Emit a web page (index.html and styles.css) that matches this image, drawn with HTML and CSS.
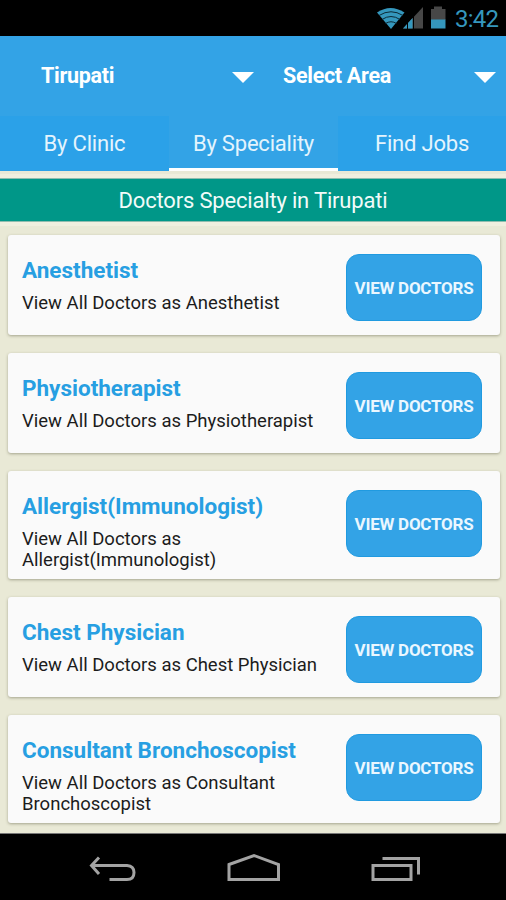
FILE: index.html
```html
<!DOCTYPE html>
<html lang="en">
<head>
  <meta charset="UTF-8" />
  <title>Doctors Specialty in Tirupati</title>
  <meta name="viewport" content="width=device-width, initial-scale=1.0" />
  <link rel="stylesheet" href="styles.css">
</head>
<body>

  <div class="status-bar">
    <svg class="status-icons" width="70" height="36" viewBox="0 0 70 36">
      <!-- wifi -->
      <path d="M0 12.5Q13.5 3.500 27.5 12.5L14 29Z" fill="#3597bd" />
      <path d="M2 15.500Q14 8 26 15.500M5 19.500Q14 13.5 23 19.500M8.500 23.500Q14 20 19.500 23.500" fill="none" stroke="#0b2a36" stroke-width="1" />
      <!-- signal -->
      <path d="M46 7V28.500H26Z" fill="#474747" />
      <path d="M35.500 18V28.500H26Z" fill="#3597bd" />
      <path d="M30.500 20V29M36.500 14V29" stroke="#000" stroke-width="1" />
      <!-- battery -->
      <path d="M54 9H57V6.500H65V9H68.500V20H54Z" fill="#474747" />
      <path d="M54 19.500H68.500V28.500H54Z" fill="#3597bd" />
    </svg>
    <span class="time">3:42</span>
  </div>

  <div class="spinners">
    <div class="spinner city"><span>Tirupati</span><i class="caret"></i></div>
    <div class="spinner area"><span>Select Area</span><i class="caret"></i></div>
  </div>

  <div class="tabs">
    <a class="tab">By Clinic</a>
    <a class="tab active">By Speciality</a>
    <a class="tab">Find Jobs</a>
  </div>

  <h1 class="banner"><span>Doctors Specialty in Tirupati</span></h1>

  <div class="list">
    <div class="card">
      <div class="info">
        <h2><span>Anesthetist</span></h2>
        <p><span>View All Doctors as Anesthetist</span></p>
      </div>
      <button><span>VIEW DOCTORS</span></button>
    </div>
    <div class="card">
      <div class="info">
        <h2><span>Physiotherapist</span></h2>
        <p><span>View All Doctors as Physiotherapist</span></p>
      </div>
      <button><span>VIEW DOCTORS</span></button>
    </div>
    <div class="card tall">
      <div class="info">
        <h2><span>Allergist(Immunologist)</span></h2>
        <p><span>View All Doctors as<br>Allergist(Immunologist)</span></p>
      </div>
      <button><span>VIEW DOCTORS</span></button>
    </div>
    <div class="card">
      <div class="info">
        <h2><span>Chest Physician</span></h2>
        <p><span>View All Doctors as Chest Physician</span></p>
      </div>
      <button><span>VIEW DOCTORS</span></button>
    </div>
    <div class="card tall">
      <div class="info">
        <h2><span>Consultant Bronchoscopist</span></h2>
        <p><span>View All Doctors as Consultant<br>Bronchoscopist</span></p>
      </div>
      <button><span>VIEW DOCTORS</span></button>
    </div>
  </div>

  <div class="nav-bar">
    <svg width="48" height="30" viewBox="0 0 48 30">
      <path d="M10 2.500L2.500 10.500L10 19M3 10.500H38Q45 11 45 17.500Q45 24.500 38 24.500H20.500" />
    </svg>
    <svg width="54" height="30" viewBox="0 0 54 30">
      <path d="M1 9.500L26 .5L50.500 9.500V24.500H1Z" />
    </svg>
    <svg width="50" height="30" viewBox="0 0 50 30">
      <path d="M1 10.500H39V24.500H1ZM10.500 3.500H46.500V19.500" />
    </svg>
  </div>

</body>
</html>
```
FILE: styles.css
```css
* {
  box-sizing: border-box;
}

body {
  margin: 0;
  width: 506px;
  height: 900px;
  display: flex;
  flex-direction: column;
  overflow: hidden;
  background: #e9e9d6;
  font-family: Roboto, sans-serif;
}

h1, h2, p {
  margin: 0;
}

.status-bar {
  height: 36px;
  padding-right: 8px;
  display: flex;
  justify-content: flex-end;
  background: #000;
}

.time {
  width: 43px;
  margin-left: 8px;
  font-size: 24px;
  letter-spacing: -.8px;
  line-height: 38px;
  color: #3597bd;
  white-space: nowrap;
}

.spinners {
  height: 80px;
  display: flex;
  background: #33a3e6;
  color: #fff;
  font-size: 21.500px;
  font-weight: 700;
  letter-spacing: -.3px;
}

.spinner {
  display: flex;
  align-items: center;
  justify-content: space-between;
}

.spinner span {
  margin-top: -1px;
}

.city {
  width: 254px;
  padding-left: 41px;
}

.area {
  width: 242px;
  padding-left: 29px;
}

.caret {
  margin-top: 2px;
  border-left: 11px solid transparent;
  border-right: 11px solid transparent;
  border-top: 11px solid #fff;
}

.tabs {
  height: 55px;
  display: grid;
  grid-template-columns: 169px 169px 168px;
  background: #2ba1e8;
  color: #e4f4fd;
  font-size: 22px;
  letter-spacing: -.2px;
  line-height: 56px;
  text-align: center;
}

.tab.active {
  height: 55px;
  background: #33a3e6;
  border-bottom: 3px solid #fff;
}

.banner {
  height: 42px;
  margin-top: 8px;
  background: #009788;
  color: #f1fbf9;
  font-size: 22px;
  font-weight: 400;
  letter-spacing: -.18px;
  line-height: 43px;
  text-align: center;
  box-shadow: 0 0 0 1px #8fbdae, 0 0 0 5px #f0efdf;
}

.list {
  flex: 1;
  padding: 14px 6px 0 8px;
  display: flex;
  flex-direction: column;
  gap: 18.500px;
}

.card {
  height: 99.500px;
  flex: none;
  padding: 19px 18px 0 14px;
  display: flex;
  justify-content: space-between;
  align-items: flex-start;
  background: #fafafa;
  border-radius: 3px;
  box-shadow: 0 1px 3px rgba(80, 80, 50, .45);
}

.card.tall {
  height: 107.500px;
}

.card h2 {
  height: 32px;
  color: #279fe2;
  font-size: 22.500px;
  font-weight: 700;
  line-height: 33px;
}

.card p {
  margin-top: 7px;
  color: #1c1c1c;
  font-size: 18.500px;
  line-height: 21px;
}

.info {
  white-space: nowrap;
}

button {
  flex: none;
  width: 136px;
  height: 67px;
  padding: 0;
  border: 1px solid #209ae0;
  border-radius: 13px;
  background: #33a3e6;
  color: #eaf7ff;
  font-family: inherit;
  font-size: 17px;
  font-weight: 700;
  letter-spacing: -.25px;
  white-space: nowrap;
}

.nav-bar {
  height: 67px;
  padding: 21px 84px 0 89px;
  display: flex;
  justify-content: space-between;
  background: #000;
  border-top: 1px solid #777;
}

.nav-bar svg {
  overflow: visible;
}

.nav-bar path {
  fill: none;
  stroke: #a3a3a3;
  stroke-width: 3;
}
```
